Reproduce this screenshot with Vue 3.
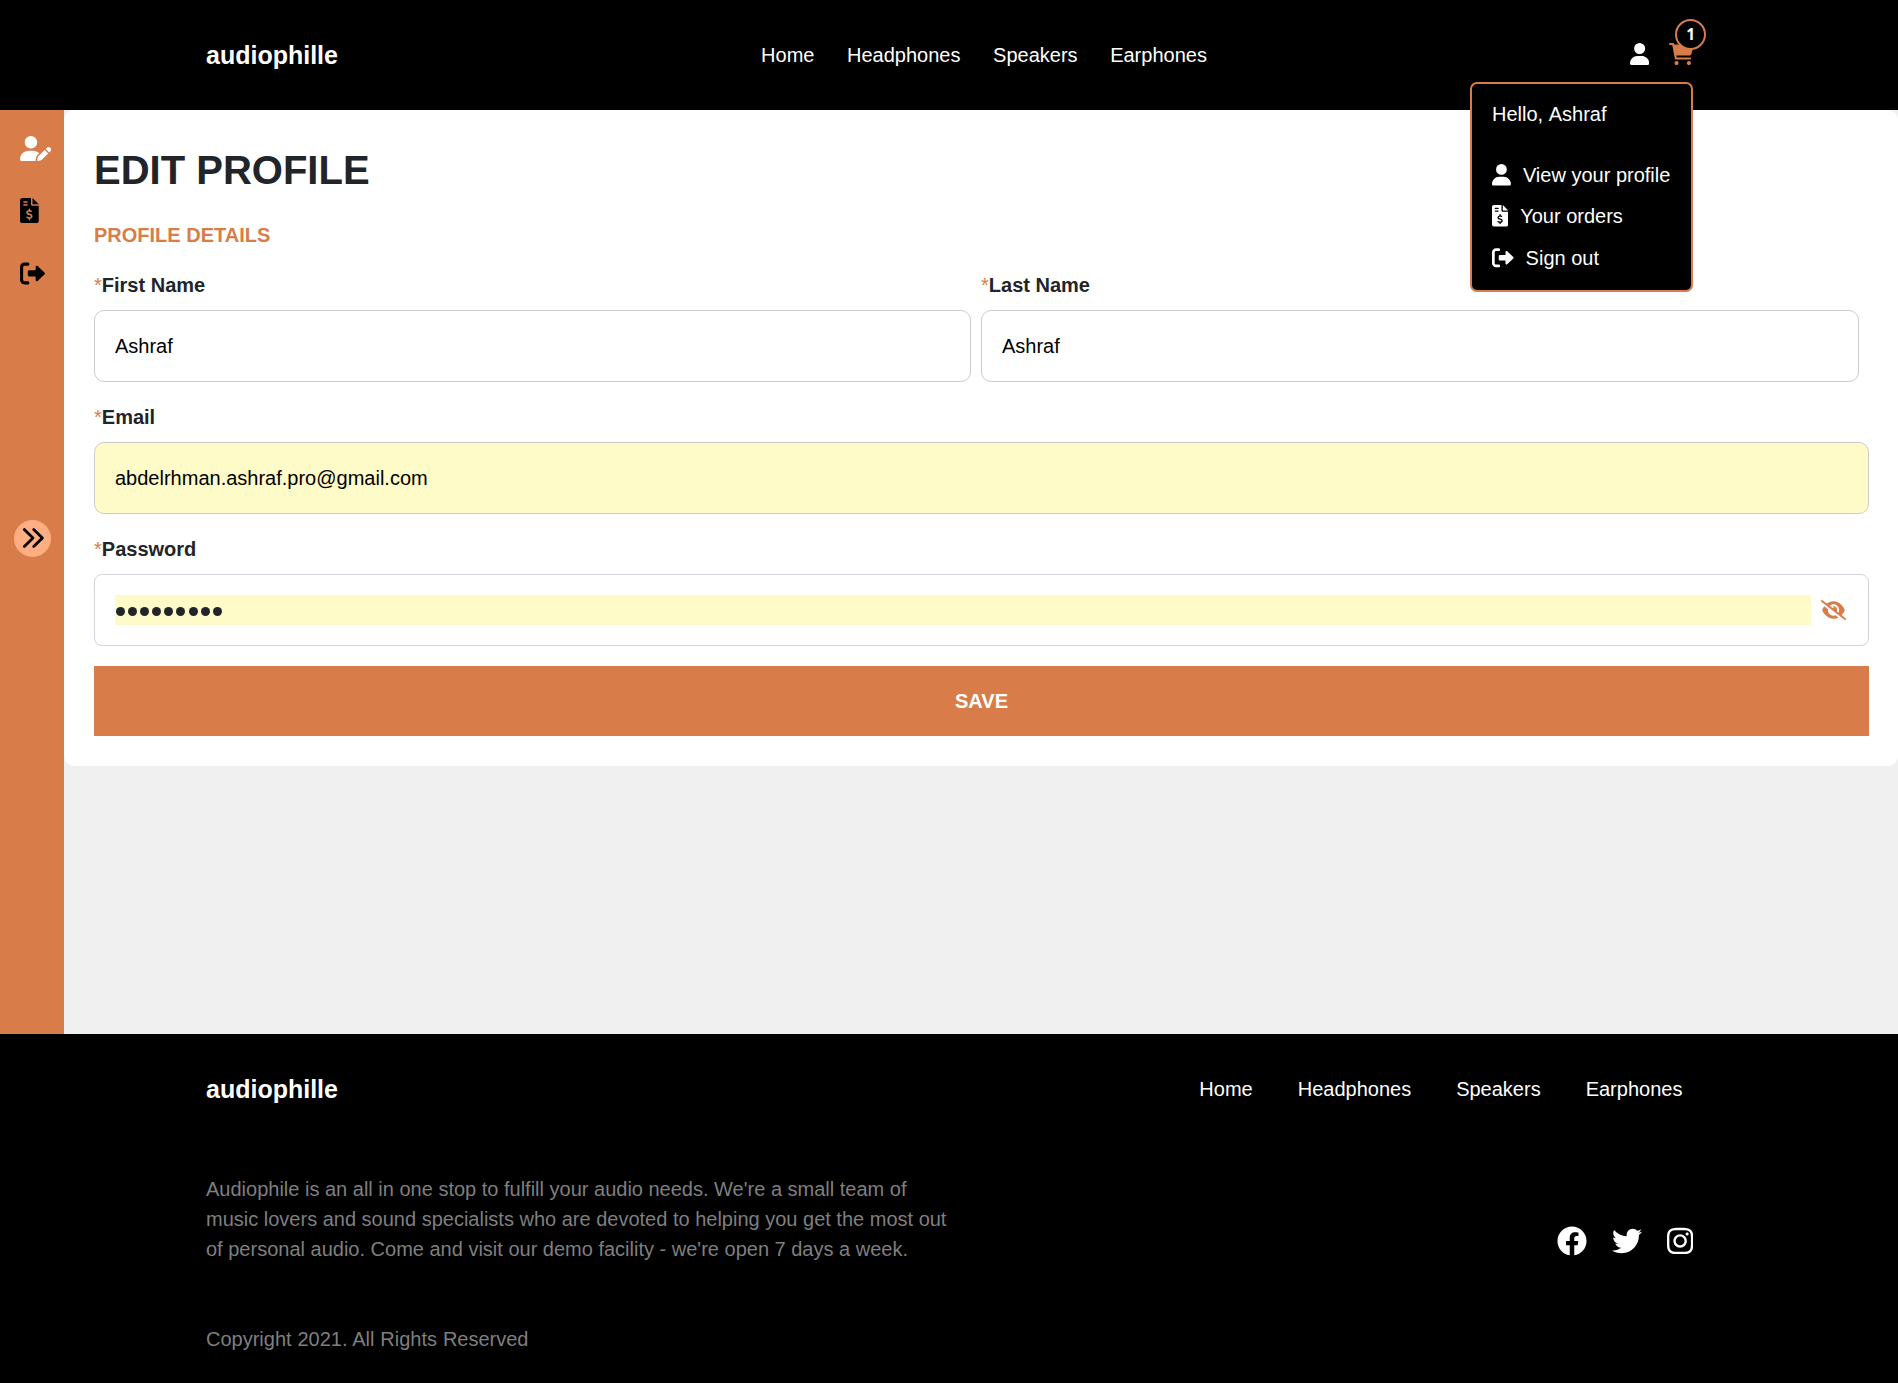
<script setup>
import { ref } from 'vue'

const links = ['Home', 'Headphones', 'Speakers', 'Earphones']
const firstName = ref('Ashraf')
const lastName = ref('Ashraf')
const email = ref('abdelrhman.ashraf.pro@gmail.com')
const passwordLength = 9

const icons = {
  user: {
    box: '0 0 448 512',
    d: 'M224 256A128 128 0 1 0 224 0a128 128 0 1 0 0 256zM274.7 304H173.3C77.61 304 0 381.6 0 477.3c0 19.14 15.52 34.67 34.66 34.67h378.7C432.5 512 448 496.5 448 477.3C448 381.6 370.4 304 274.7 304z',
  },
  userPen: {
    box: '0 0 640 512',
    d: 'M224 256A128 128 0 1 0 224 0a128 128 0 1 0 0 256zm-45.7 48C79.8 304 0 383.8 0 482.3C0 498.7 13.3 512 29.7 512H322.8c-3.1-8.8-3.7-18.4-1.4-27.8l15-60.1c2.8-11.3 8.6-21.5 16.8-29.7l40.3-40.3c-32.1-31-75.7-50.1-123.9-50.1H178.3zm435.5-68.3c-15.6-15.6-40.9-15.6-56.6 0l-29.4 29.4 71 71 29.4-29.4c15.6-15.6 15.6-40.9 0-56.6l-14.4-14.4zM375.9 417c-4.1 4.1-7 9.2-8.4 14.9l-15 60.1c-1.4 5.5 .2 11.2 4.2 15.2s9.7 5.6 15.2 4.2l60.1-15c5.6-1.4 10.8-4.3 14.9-8.4L576.1 358.7l-71-71L375.9 417z',
  },
  invoice: {
    box: '0 0 384 512',
    d: 'M48 0C21.5 0 0 21.5 0 48V464c0 26.5 21.5 48 48 48H336c26.5 0 48-21.5 48-48V160H256c-17.7 0-32-14.3-32-32V0H48zM256 0V128H384L256 0zM64 80c0-8.8 7.2-16 16-16h64c8.8 0 16 7.2 16 16s-7.2 16-16 16H80c-8.8 0-16-7.2-16-16zm0 64c0-8.8 7.2-16 16-16h64c8.8 0 16 7.2 16 16s-7.2 16-16 16H80c-8.8 0-16-7.2-16-16zm128 72c8.8 0 16 7.2 16 16v17.3c8.5 1.2 16.7 3.1 24.1 5.1c8.5 2.3 13.6 11 11.3 19.6s-11 13.6-19.6 11.3c-11.1-3-22-5.2-32.1-5.3c-8.4-.1-17.4 1.8-23.6 5.5c-5.7 3.4-8.1 7.3-8.1 12.8c0 3.7 1.3 6.5 7.3 10.1c6.9 4.1 16.6 7.1 29.2 10.9l.5 .1c11.3 3.4 25.3 7.6 36.3 14.6c12.1 7.6 22.4 19.7 22.7 38.2c.3 19.3-9.6 33.3-22.9 41.6c-7.7 4.8-16.4 7.6-25.1 9.1V440c0 8.8-7.2 16-16 16s-16-7.2-16-16V422.2c-11.2-2.1-21.7-5.7-30.9-8.9c-2.1-.7-4.2-1.4-6.2-2.1c-8.4-2.8-12.9-11.9-10.1-20.2s11.9-12.9 20.2-10.1c2.5 .8 4.8 1.6 7.1 2.4c13.6 4.6 24.6 8.4 36.3 8.7c9.1 .3 17.9-1.7 23.7-5.3c5.1-3.2 7.9-7.3 7.8-14c-.1-4.6-1.8-7.8-7.7-11.6c-6.8-4.3-16.5-7.4-29-11.2l-1.6-.5c-11-3.3-24.3-7.3-34.8-13.7c-12-7.2-22.6-18.9-22.7-37.3c-.1-19.4 10.8-32.8 23.8-40.5c7.5-4.4 15.8-7.2 24.1-8.7V232c0-8.8 7.2-16 16-16z',
  },
  signOut: {
    box: '0 0 512 512',
    d: 'M96 480h64C177.7 480 192 465.7 192 448S177.7 416 160 416H96c-17.67 0-32-14.33-32-32V128c0-17.67 14.33-32 32-32h64C177.7 96 192 81.67 192 64S177.7 32 160 32H96C42.98 32 0 74.98 0 128v256C0 437 42.98 480 96 480zM504.8 238.5l-144.1-136c-6.975-6.578-17.2-8.375-26-4.594c-8.803 3.797-14.51 12.47-14.51 22.05l-.0918 72l-128-.001c-17.69 0-32.02 14.33-32.02 32v64c0 17.67 14.34 32 32.02 32l128 .001l.0918 71.1c0 9.578 5.707 18.25 14.51 22.05c8.803 3.781 19.03 1.984 26-4.594l144.1-136C514.4 264.4 514.4 247.6 504.8 238.5z',
  },
  cart: {
    box: '0 0 576 512',
    d: 'M96 0C107.5 0 117.4 8.19 119.6 19.51L121.1 32H541.8C562.1 32 578.3 52.25 572.6 72.66L518.6 264.7C514.7 278.5 502.1 288 487.8 288H170.7L179.9 336H488C501.3 336 512 346.7 512 360C512 373.3 501.3 384 488 384H159.1C148.5 384 138.6 375.8 136.4 364.5L76.14 48H24C10.75 48 0 37.25 0 24C0 10.75 10.75 0 24 0H96zM128 464C128 437.5 149.5 416 176 416C202.5 416 224 437.5 224 464C224 490.5 202.5 512 176 512C149.5 512 128 490.5 128 464zM512 464C512 490.5 490.5 512 464 512C437.5 512 416 490.5 416 464C416 437.5 437.5 416 464 416C490.5 416 512 437.5 512 464z',
  },
  eyeSlash: {
    box: '0 0 640 512',
    d: 'M150.7 92.77C195 58.27 251.8 32 320 32C400.8 32 465.5 68.84 512.6 112.6C559.4 156 590.7 207.1 605.5 243.7C608.8 251.6 608.8 260.4 605.5 268.3C592.1 300.6 565.2 346.1 525.6 386.7L630.8 469.1C641.2 477.3 643.1 492.4 634.9 502.8C626.7 513.2 611.6 515.1 601.2 506.9L9.196 42.89C-1.236 34.71-3.065 19.63 5.112 9.196C13.29-1.236 28.37-3.065 38.81 5.112L150.7 92.77zM223.1 149.5L313.4 220.3C317.6 211.8 320 202.2 320 191.1C320 180.5 316.1 169.7 311.6 160.4C314.4 160.1 317.2 159.1 320 159.1C373 159.1 416 202.1 416 255.1C416 269.7 413.1 282.7 407.1 294.5L446.6 324.7C457.7 304.3 464 280.9 464 255.1C464 176.5 399.5 111.1 320 111.1C282.7 111.1 248.6 126.2 223.1 149.5zM320 480C239.2 480 174.5 443.2 127.4 399.4C80.62 355.1 49.34 304 34.46 268.3C31.18 260.4 31.18 251.6 34.46 243.7C44 220.8 60.29 191.2 83.09 161.5L177.4 235.8C176.5 242.4 176 249.1 176 255.1C176 335.5 240.5 400 320 400C338.7 400 356.6 396.4 373 389.9L446.2 447.5C409.9 467.1 367.8 480 320 480H320z',
  },
  facebook: {
    box: '0 0 512 512',
    d: 'M504 256C504 119 393 8 256 8S8 119 8 256c0 123.78 90.69 226.38 209.25 245V327.69h-63V256h63v-54.64c0-62.15 37-96.48 93.67-96.48 27.14 0 55.52 4.84 55.52 4.84v61h-31.28c-30.8 0-40.41 19.12-40.41 38.73V256h68.78l-11 71.69h-57.78V501C413.31 482.38 504 379.78 504 256z',
  },
  twitter: {
    box: '0 0 512 512',
    d: 'M459.37 151.716c.325 4.548.325 9.097.325 13.645 0 138.72-105.583 298.558-298.558 298.558-59.452 0-114.68-17.219-161.137-47.106 8.447.974 16.568 1.299 25.34 1.299 49.055 0 94.213-16.568 130.274-44.832-46.132-.975-84.792-31.188-98.112-72.772 6.498.974 12.995 1.624 19.818 1.624 9.421 0 18.843-1.3 27.614-3.573-48.081-9.747-84.143-51.98-84.143-102.985v-1.299c13.969 7.797 30.214 12.67 47.431 13.319-28.264-18.843-46.781-51.005-46.781-87.391 0-19.492 5.197-37.36 14.294-52.954 51.655 63.675 129.3 105.258 216.365 109.807-1.624-7.797-2.599-15.918-2.599-24.04 0-57.828 46.782-104.934 104.934-104.934 30.213 0 57.502 12.67 76.67 33.137 23.715-4.548 46.456-13.32 66.599-25.34-7.798 24.366-24.366 44.833-46.132 57.827 21.117-2.273 41.584-8.122 60.426-16.243-14.292 20.791-32.161 39.308-52.628 54.253z',
  },
  instagram: {
    box: '0 0 448 512',
    d: 'M224.1 141c-63.6 0-114.9 51.3-114.9 114.9s51.3 114.9 114.9 114.9S339 319.5 339 255.9 287.7 141 224.1 141zm0 189.6c-41.1 0-74.7-33.5-74.7-74.7s33.5-74.7 74.7-74.7 74.7 33.5 74.7 74.7-33.6 74.7-74.7 74.7zm146.4-194.3c0 14.9-12 26.8-26.8 26.8-14.9 0-26.8-12-26.8-26.8s12-26.8 26.8-26.8 26.8 12 26.8 26.8zm76.1 27.2c-1.7-35.9-9.9-67.7-36.2-93.9-26.2-26.2-58-34.4-93.9-36.2-37-2.1-147.9-2.1-184.9 0-35.8 1.7-67.6 9.9-93.9 36.1s-34.4 58-36.2 93.9c-2.1 37-2.1 147.9 0 184.9 1.7 35.9 9.9 67.7 36.2 93.9s58 34.4 93.9 36.2c37 2.1 147.9 2.1 184.9 0 35.9-1.7 67.7-9.9 93.9-36.2 26.2-26.2 34.4-58 36.2-93.9 2.1-37 2.1-147.8 0-184.8zM398.8 388c-7.8 19.6-22.9 34.7-42.6 42.6-29.5 11.7-99.5 9-132.1 9s-102.7 2.6-132.1-9c-19.6-7.8-34.7-22.9-42.6-42.6-11.7-29.5-9-99.5-9-132.1s-2.6-102.7 9-132.1c7.8-19.6 22.9-34.7 42.6-42.6 29.5-11.7 99.5-9 132.1-9s102.7-2.6 132.1 9c19.6 7.8 34.7 22.9 42.6 42.6 11.7 29.5 9 99.5 9 132.1s2.7 102.7-9 132.1z',
  },
}

const menu = [
  { icon: icons.user, label: 'View your profile' },
  { icon: icons.invoice, label: 'Your orders' },
  { icon: icons.signOut, label: 'Sign out' },
]
const social = [icons.facebook, icons.twitter, icons.instagram]
</script>

<template>
  <div class="page">
    <header class="header">
      <a class="logo">audiophille</a>
      <nav class="nav">
        <a v-for="l in links" :key="l">{{ l }}</a>
      </nav>
      <div class="actions">
        <svg class="icon" :viewBox="icons.user.box"><path :d="icons.user.d" /></svg>
        <div class="cart">
          <svg class="icon" :viewBox="icons.cart.box"><path :d="icons.cart.d" /></svg>
          <span class="badge">1</span>
        </div>
        <div class="dropdown">
          <p class="hello">Hello, Ashraf</p>
          <a v-for="m in menu" :key="m.label" class="menu-item">
            <svg class="icon" :viewBox="m.icon.box"><path :d="m.icon.d" /></svg>
            <span>{{ m.label }}</span>
          </a>
        </div>
      </div>
    </header>

    <main class="main">
      <aside class="sidebar">
        <a class="side-link active"><svg class="icon" :viewBox="icons.userPen.box"><path :d="icons.userPen.d" /></svg></a>
        <a class="side-link"><svg class="icon" :viewBox="icons.invoice.box"><path :d="icons.invoice.d" /></svg></a>
        <a class="side-link last"><svg class="icon" :viewBox="icons.signOut.box"><path :d="icons.signOut.d" /></svg></a>
        <button class="toggle" type="button" aria-label="Expand">
          <svg viewBox="0 0 37 37"><path d="M10.3 9.6 19 18 10.3 26.4M19.7 9.6 28.4 18 19.7 26.4" /></svg>
        </button>
      </aside>

      <section class="panel">
        <h1>EDIT PROFILE</h1>
        <h2>PROFILE DETAILS</h2>
        <form @submit.prevent>
          <div class="row">
            <div class="field half">
              <label><i>*</i>First Name</label>
              <input v-model="firstName" type="text" />
            </div>
            <div class="field half">
              <label><i>*</i>Last Name</label>
              <input v-model="lastName" type="text" />
            </div>
          </div>
          <div class="field">
            <label><i>*</i>Email</label>
            <input v-model="email" class="filled" type="text" />
          </div>
          <div class="field">
            <label><i>*</i>Password</label>
            <div class="password">
              <div class="mask"><b v-for="n in passwordLength" :key="n"></b></div>
              <svg class="icon" :viewBox="icons.eyeSlash.box"><path :d="icons.eyeSlash.d" /></svg>
            </div>
          </div>
          <button class="save" type="submit">SAVE</button>
        </form>
      </section>
    </main>

    <footer class="footer">
      <div class="footer-top">
        <a class="logo">audiophille</a>
        <nav class="nav">
          <a v-for="l in links" :key="l">{{ l }}</a>
        </nav>
      </div>
      <div class="footer-mid">
        <p>Audiophile is an all in one stop to fulfill your audio needs. We're a small team of music lovers and sound specialists who are devoted to helping you get the most out of personal audio. Come and visit our demo facility - we're open 7 days a week.</p>
        <div class="social">
          <svg v-for="(s, i) in social" :key="i" class="icon" :viewBox="s.box"><path :d="s.d" /></svg>
        </div>
      </div>
      <p class="copyright">Copyright 2021. All Rights Reserved</p>
    </footer>
  </div>
</template>

<style>
body {
  margin: 0;
  background: #000;
}
</style>

<style scoped>
* {
  box-sizing: border-box;
}
.page {
  height: 1383px;
  display: flex;
  flex-direction: column;
  font: 20px/1.5 "Liberation Sans", Arial, sans-serif;
  color: #212529;
  background: #f0f0f0;
  overflow: hidden;
}
h1,
h2,
p {
  margin: 0;
}
.icon {
  display: block;
  height: 1em;
  width: auto;
  fill: currentColor;
}
.header {
  height: 110px;
  flex: none;
  background: #000;
  color: #fff;
  display: flex;
  justify-content: space-between;
  align-items: center;
  padding: 0 204px 0 206px;
}
.logo {
  font-size: 25px;
  font-weight: 700;
}
.header .logo {
  padding-top: 1.5px;
}
.nav {
  display: flex;
  gap: 32.6px;
}
.actions {
  position: relative;
  display: flex;
  gap: 20px;
  font-size: 22px;
  margin-bottom: 3px;
}
.cart {
  position: relative;
  color: #d87d4a;
}
.badge {
  position: absolute;
  left: 6px;
  top: -24px;
  width: 31px;
  height: 31px;
  border: 2px solid #d87d4a;
  border-radius: 50%;
  background: #000;
  color: #fff;
  font: 700 15.5px/27px "Open Sans", sans-serif;
  text-align: center;
}
.dropdown {
  position: absolute;
  right: 1px;
  top: 39px;
  z-index: 2;
  width: 223px;
  height: 210px;
  padding: 15px 20px;
  border: 2px solid #d87d4a;
  border-radius: 7px;
  background: #000;
  font-size: 20px;
}
.hello {
  margin-bottom: 25.5px;
  word-spacing: 1.1px;
}
.menu-item {
  display: flex;
  align-items: center;
  gap: 12px;
  height: 41.5px;
  white-space: nowrap;
}
.menu-item .icon {
  font-size: 21.6px;
}
.main {
  height: 924px;
  flex: none;
  display: flex;
  align-items: flex-start;
}
.sidebar {
  width: 64px;
  height: 924px;
  flex: none;
  background: #d87d4a;
  color: #000;
  padding: 20px 0 0 20px;
  font-size: 25px;
}
.side-link {
  display: flex;
  align-items: center;
  height: 37px;
  margin-bottom: 25px;
}
.side-link.last {
  margin: 26px 0 0;
}
.side-link.active {
  color: #fff;
}
.toggle {
  display: block;
  width: 37px;
  height: 37px;
  padding: 0;
  border: 0;
  border-radius: 50%;
  background: #ffad83;
  margin: 228px 0 0 -6px;
}
.toggle svg {
  display: block;
  fill: none;
  stroke: #000;
  stroke-width: 2.8;
  stroke-linecap: round;
  stroke-linejoin: round;
}
.panel {
  flex: 1;
  background: #fff;
  border-radius: 10px;
  padding: 30px 29px 30px 30px;
}
h1 {
  font-size: 40px;
  line-height: 60px;
  margin-bottom: 20px;
}
h2 {
  font-size: 20px;
  line-height: 30px;
  color: #d87d4a;
  margin-bottom: 20px;
}
.row {
  display: grid;
  grid-template-columns: 887px 888px;
}
.field {
  margin-bottom: 20px;
}
.half {
  padding-right: 10px;
}
label {
  display: block;
  font-weight: 700;
  margin-bottom: 10px;
}
label i {
  font-style: normal;
  font-weight: 400;
  color: #d87d4a;
}
input {
  display: block;
  width: 100%;
  height: 72px;
  padding: 20px;
  border: 1px solid #ccc;
  border-radius: 10px;
  background: #fff;
  color: #000;
  font: inherit;
  outline: 0;
}
input.filled {
  background: #fffbc8;
}
.password {
  height: 72px;
  display: flex;
  align-items: center;
  gap: 10px;
  padding: 0 22px 0 20px;
  border: 1px solid #ced4da;
  border-radius: 8px;
}
.mask {
  flex: 1;
  height: 30px;
  display: flex;
  align-items: center;
  gap: 3.1px;
  padding: 2px 0 0 1px;
  background: #fffbc8;
}
.mask b {
  width: 9px;
  height: 9px;
  border-radius: 50%;
  background: #212529;
}
.password .icon {
  color: #d87d4a;
}
.save {
  display: block;
  width: 100%;
  height: 70px;
  border: 0;
  padding: 0;
  background: #d87d4a;
  color: #fff;
  font: inherit;
  font-weight: 700;
}
.footer {
  flex: 1;
  background: #000;
  color: #7f7f7f;
  padding: 37px 204px 0 206px;
}
.footer-top {
  display: flex;
  justify-content: space-between;
  align-items: center;
  color: #fff;
  height: 37.5px;
  margin-bottom: 65.5px;
}
.footer-top .nav {
  gap: 45px;
  margin: 0 11.6px 2px 0;
}
.footer-mid {
  display: flex;
  justify-content: space-between;
  align-items: flex-start;
  margin-bottom: 60px;
}
.footer-mid p {
  width: 744px;
}
.social {
  display: flex;
  gap: 25px;
  margin: 52px 1px 0 0;
  font-size: 30px;
  color: #fff;
}
.social .icon {
  height: 30px;
}
.copyright {
  word-spacing: 0.3px;
}
</style>
